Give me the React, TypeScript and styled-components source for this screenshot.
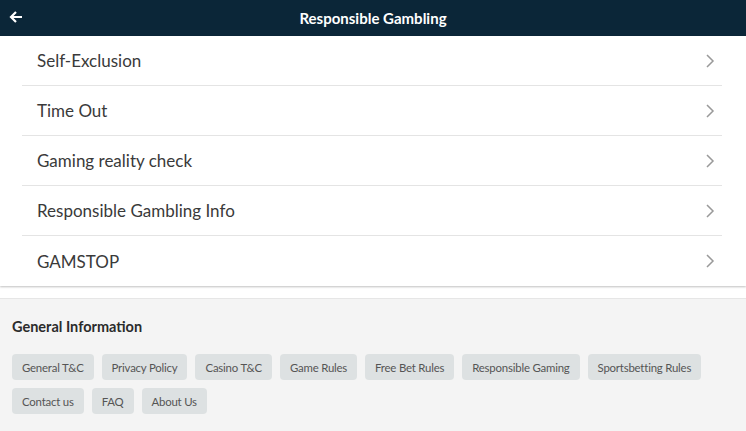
import React from "react";
import styled, { createGlobalStyle } from "styled-components";

const Global = createGlobalStyle`
  html, body { margin: 0; padding: 0; background: #f4f4f4; }
  body { font-family: Lato, "Open Sans", sans-serif; }
  * { box-sizing: border-box; }
`;

const Page = styled.div`
  width: 746px;
  min-height: 431px;
  display: flex;
  flex-direction: column;
  background: #f4f4f4;
`;

const Header = styled.header`
  height: 36px;
  background: #0b2638;
  display: flex;
  align-items: center;
  justify-content: center;
  position: relative;
  color: #fff;
`;

const BackButton = styled.button`
  position: absolute;
  left: 7px;
  top: 8px;
  width: 18px;
  height: 18px;
  padding: 0;
  border: 0;
  background: transparent;
  color: #fff;
  display: flex;
  align-items: center;
  justify-content: center;
`;

const Title = styled.h1`
  margin: 0;
  font-size: 15px;
  font-weight: 700;
  letter-spacing: 0;
`;

const ListWrap = styled.div`
  background: #fff;
  padding: 0 24px 0 22px;
  box-shadow: 0 1px 2px rgba(0, 0, 0, 0.25);
  position: relative;
  z-index: 1;
`;

const Row = styled.div<{ $last?: boolean }>`
  height: 50px;
  display: flex;
  align-items: center;
  justify-content: space-between;
  padding: 0 6px 0 15px;
  border-bottom: ${(p) => (p.$last ? "none" : "1px solid #e4e4e4")};
  color: #3a3a3a;
  font-size: 17px;
  font-weight: 400;
`;

const Spacer = styled.div`
  height: 13px;
  background: #fff;
  border-bottom: 1px solid #e6e6e6;
`;

const Footer = styled.section`
  background: #f4f4f4;
  padding: 19px 12px 16px 12px;
  flex: 1;
`;

const FooterTitle = styled.h2`
  margin: 0 0 19px 0;
  font-size: 14.5px;
  font-weight: 700;
  color: #2b2b2b;
`;

const Chips = styled.div`
  display: flex;
  flex-wrap: wrap;
  gap: 8px 8px;
`;

const Chip = styled.a`
  height: 26px;
  padding: 0 10px;
  display: flex;
  align-items: center;
  border-radius: 4px;
  background: #dde1e2;
  color: #555;
  font-size: 11.4px;
  letter-spacing: -0.2px;
`;

const Chevron = () => (
  <svg width="12" height="16" viewBox="0 0 12 16">
    <path d="M3 2 L9 8 L3 14" fill="none" stroke="#999" strokeWidth="1.5" />
  </svg>
);

const items = ["Self-Exclusion", "Time Out", "Gaming reality check", "Responsible Gambling Info", "GAMSTOP"];
const chips = [
  "General T&C",
  "Privacy Policy",
  "Casino T&C",
  "Game Rules",
  "Free Bet Rules",
  "Responsible Gaming",
  "Sportsbetting Rules",
  "Contact us",
  "FAQ",
  "About Us",
];

export default function App() {
  return (
    <Page>
      <Global />
      <Header>
        <BackButton aria-label="Back">
          <svg width="16" height="16" viewBox="0 0 16 16">
            <path d="M14 8 H3 M8 3 L3 8 L8 13" fill="none" stroke="#fff" strokeWidth="2.2" />
          </svg>
        </BackButton>
        <Title>Responsible Gambling</Title>
      </Header>
      <ListWrap>
        {items.map((t, i) => (
          <Row key={t} $last={i === items.length - 1}>
            <span>{t}</span>
            <Chevron />
          </Row>
        ))}
      </ListWrap>
      <Spacer />
      <Footer>
        <FooterTitle>General Information</FooterTitle>
        <Chips>
          {chips.map((c) => (
            <Chip key={c}>{c}</Chip>
          ))}
        </Chips>
      </Footer>
    </Page>
  );
}
